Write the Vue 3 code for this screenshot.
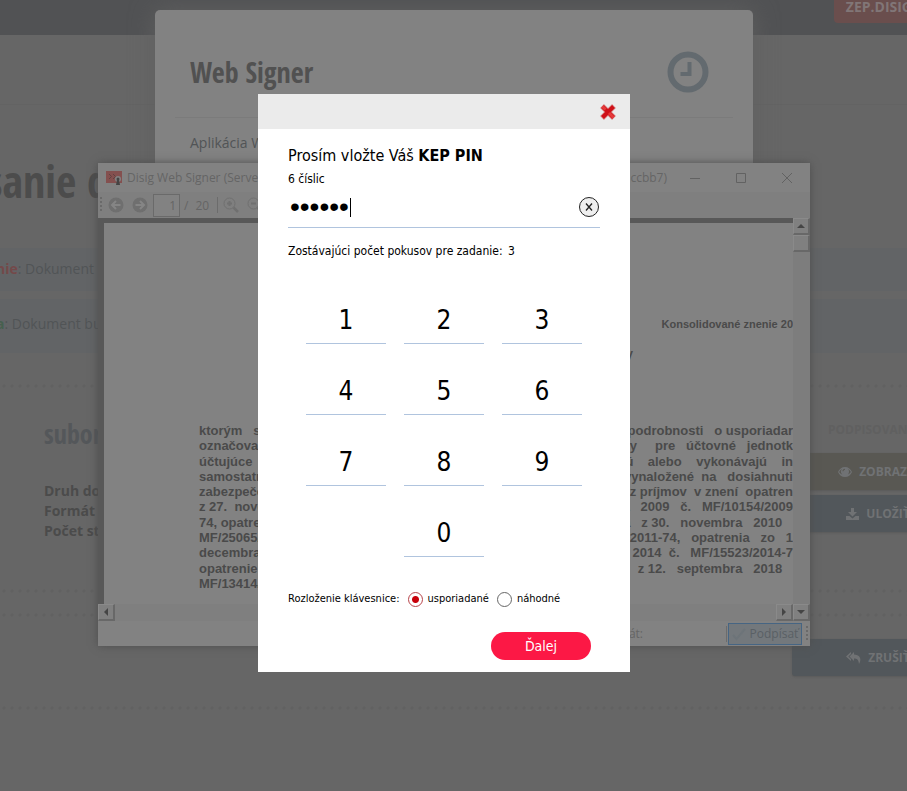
<template>
  <div class="page">
    <header class="topbar">
      <a class="env-badge" href="#">ZEP.DISIG.SK</a>
    </header>
    <div class="subnav"></div>

    <h1 class="page-title">sanie dokumentu</h1>

    <p class="alert"><strong class="alert-error">nie</strong>: Dokument</p>
    <p class="alert alert--tall"><strong class="alert-ok">a</strong>: Dokument bude</p>

    <div class="dots dots--first"></div>
    <section class="file">
      <div class="file-info">
        <h2>subor.pdf</h2>
        <p>Druh dokumentu</p>
        <p>Formát</p>
        <p>Počet strán</p>
      </div>
      <div class="file-actions">
        <span class="file-state">PODPISOVANIE</span>
        <button class="action action--view" type="button">
          <svg width="14" height="10" viewBox="0 0 14 10"><path d="M7 0C3.800 0 1.200 2 0 5c1.200 3 3.800 5 7 5s5.800-2 7-5C12.800 2 10.200 0 7 0zM4.200 1.800a4 4 0 0 0 0 5.600C2.800 7 1.800 6 1.200 5c.6-1.200 1.600-2.400 3-3.200zm5.600 0c1.400.8 2.400 2 3 3.200-.6 1-1.600 2-3 2.600a4 4 0 0 0 0-5.800zM7 1.800a2.500 2.500 0 0 0-2.500 2.500h1A1.500 1.500 0 0 1 7 2.800z" fill="currentColor" fill-rule="evenodd" /></svg>
          ZOBRAZIŤ
        </button>
        <button class="action" type="button">
          <svg width="13" height="12" viewBox="0 0 13 12"><path d="M5 0h3v4h3L6.500 8.500 2 4h3zM0 8h3.500l3 2.500 3-2.500H13v4H0z" fill="currentColor" /></svg>
          ULOŽIŤ
        </button>
      </div>
    </section>
    <div class="dots"></div>
    <div class="dots dots--second"></div>
    <div class="cancel-row">
      <button class="action" type="button">
        <svg width="15" height="12" viewBox="0 0 15 12"><path d="M5 0L0 4.500 5 9V7L2.300 4.500 5 2zM8 0L3.500 4.500 8 9V6.500c3 0 4.500 1 5 5.500C16 7 14 2.700 8 2.500z" fill="currentColor" /></svg>
        ZRUŠIŤ
      </button>
    </div>
    <div class="dots dots--last"></div>

    <section class="card">
      <div class="card-head">
        <h2>Web Signer</h2>
        <svg width="42" height="42" viewBox="0 0 42 42" fill="none" stroke="#636a6f">
          <circle cx="21" cy="21" r="17.500" stroke-width="6" />
          <path d="M22.500 11v12h-9" stroke-width="4" />
        </svg>
      </div>
      <p>Aplikácia Web Signer</p>
    </section>

    <section class="window">
      <div class="window-title">
        <svg width="17" height="16" viewBox="0 0 17 16">
          <path d="M0 1h16v12H0z" fill="#84504f" />
          <path d="M3 4l2.500 2.500L3 9M7 4l2.500 2.500L7 9" stroke="#5f4241" fill="none" />
          <circle cx="12" cy="9" r="3" fill="#828282" />
          <circle cx="12" cy="9" r="1.500" fill="#444" />
          <path d="M11 10h2l1 5h-4z" fill="#444" />
        </svg>
        <span class="window-name">Disig Web Signer (Server:</span>
        <span class="window-id">5ccbb7)</span>
        <div class="window-controls">
          <svg width="12" height="12" viewBox="0 0 12 12"><path d="M1 6.500h10" /></svg>
          <svg width="12" height="12" viewBox="0 0 12 12"><path d="M1.500 1.500h9v9h-9z" /></svg>
          <svg width="12" height="12" viewBox="0 0 12 12"><path d="M1 1l10 10M11 1L1 11" /></svg>
        </div>
      </div>

      <div class="toolbar">
        <span class="grip"></span>
        <svg width="16" height="16" viewBox="0 0 16 16"><circle cx="8" cy="8" r="7.500" fill="#6f6f6f" /><path d="M12.500 8H4M8 4L4 8l4 4" stroke="#858585" stroke-width="2" fill="none" /></svg>
        <svg width="16" height="16" viewBox="0 0 16 16"><circle cx="8" cy="8" r="7.500" fill="#6f6f6f" /><path d="M3.500 8H12M8 4l4 4-4 4" stroke="#858585" stroke-width="2" fill="none" /></svg>
        <label class="pager"><input type="text" value="1" aria-label="Strana">/ <span>20</span></label>
        <span class="divider"></span>
        <svg v-for="zoom in zooms" :key="zoom" width="16" height="16" viewBox="0 0 16 16" fill="none" stroke="#707070">
          <circle cx="6.500" cy="6.500" r="5.500" />
          <path :d="zoom" stroke-width="2" />
          <path d="M10.500 10.500l4.500 4.500" stroke-width="2.500" />
        </svg>
      </div>

      <div class="viewer">
        <div class="paper">
          <p class="paper-note">Konsolidované znenie 20</p>
          <p class="paper-heading">podrobnosti účtovnej závierky</p>
          <div class="paper-text">
            <p v-for="line in lines" :key="line[0]">
              <span>{{ line[0] }}</span>
              <span>{{ line[1] }}</span>
            </p>
          </div>
        </div>
        <div class="scroll-v">
          <span class="scroll-btn"><i class="arrow arrow--up"></i></span>
          <span class="scroll-btn scroll-thumb"></span>
        </div>
      </div>
      <div class="scroll-h">
        <span class="scroll-btn"><i class="arrow arrow--left"></i></span>
        <span class="scroll-btn scroll-end"><i class="arrow arrow--right"></i></span>
        <span class="scroll-btn"><i class="arrow arrow--down"></i></span>
      </div>
      <div class="statusbar">
        <span class="status-label">Certifikát:</span>
        <span class="divider"></span>
        <button class="sign-btn" type="button">
          <svg width="14" height="14" viewBox="0 0 14 14"><path d="M1 8l3.500 4L13 2" stroke="#6d7479" stroke-width="2" fill="none" /></svg>
          Podpísať
        </button>
        <span class="grip"></span>
      </div>
    </section>

    <div class="dialog" role="dialog" aria-labelledby="pin-label">
      <div class="dialog-head">
        <button class="close-btn" type="button" aria-label="Zavrieť">
          <svg width="18" height="18" viewBox="0 0 18 18">
            <path d="M3 3l12 12M15 3L3 15" stroke="#d98a8a" stroke-width="5.500" />
            <path d="M3.500 3.500l11 11M14.500 3.500l-11 11" stroke="#cf1018" stroke-width="4" />
            <path d="M10 10l4.500 4.500M3.500 3.500l3 3" stroke="#e63a3a" stroke-width="3" />
          </svg>
        </button>
      </div>
      <form class="dialog-body" @submit.prevent>
        <label id="pin-label" class="pin-label" for="pin">Prosím vložte Váš <strong>KEP PIN</strong></label>
        <p class="pin-hint">6 číslic</p>
        <div class="pin-field">
          <input id="pin" v-model="pin" type="password" maxlength="6" autocomplete="off">
          <span class="caret"></span>
          <button class="clear-btn" type="button" aria-label="Vymazať" @click="pin = ''">
            <svg width="20" height="20" viewBox="0 0 20 20" fill="none" stroke="#222">
              <circle cx="10" cy="10" r="9.500" fill="#efefef" />
              <path d="M7 6.500l6 7M13 6.500l-6 7" stroke-width="1.300" />
            </svg>
          </button>
        </div>
        <p class="attempts">Zostávajúci počet pokusov pre zadanie: <span>3</span></p>

        <div class="keypad">
          <button
            v-for="key in keys"
            :key="key"
            type="button"
            class="key"
            :class="{ 'key--zero': key === 0 }"
            @click="press(key)"
          >{{ key }}</button>
        </div>

        <div class="layout-row">
          <span>Rozloženie klávesnice:</span>
          <label><input v-model="layout" type="radio" name="layout" value="ordered">usporiadané</label>
          <label><input v-model="layout" type="radio" name="layout" value="random">náhodné</label>
        </div>
        <button class="next-btn" type="submit">Ďalej</button>
      </form>
    </div>
  </div>
</template>

<script setup>
import { ref } from 'vue';

const pin = ref('123456');
const layout = ref('ordered');
const keys = [1, 2, 3, 4, 5, 6, 7, 8, 9, 0];

const zooms = ['M4 6.500h5M6.500 4v5', 'M4 6.500h5'];

const lines = [
  ['ktorým   sa', 'podrobnosti   o usporiadar'],
  ['označovaní', 'položky     pre   účtovné   jednotk'],
  ['účtujúce   v', 'podnikajú    alebo    vykonávajú    in'],
  ['samostatnú', 'vynaložené  na   dosiahnuti'],
  ['zabezpečenie', 'z príjmov  v znení  opatren'],
  ['z 27.  novembra', 'decembra   2009   č.   MF/10154/2009'],
  ['74, opatrenia', 'opatrenia   z 30.   novembra   2010   '],
  ['MF/25065/', 'MF/2011-74,   opatrenia   zo   1'],
  ['decembra', 'decembra 2014  č.   MF/15523/2014-7'],
  ['opatrenie', 'opatrenia   z 12.   septembra   2018   '],
  ['MF/13414/', '']
];

const press = (key) => {
  if (pin.value.length < 6) pin.value += key;
};
</script>

<style>
body {
  margin: 0;
  background: #666;
}
</style>

<style scoped>
* {
  box-sizing: border-box;
}

h1, h2, p {
  margin: 0;
}

button {
  font-family: inherit;
  border: 0;
  padding: 0;
}

.page {
  position: relative;
  min-height: 100vh;
  overflow: hidden;
  background: #666;
  color: #515456;
  font-family: "Open Sans", "Noto Sans", sans-serif;
  font-size: 14px;
}

.topbar {
  display: flex;
  justify-content: flex-end;
  height: 35px;
  background: #515254;
}

.env-badge {
  height: 23px;
  padding: 0 12px;
  margin-right: -38px;
  border-radius: 0 0 4px 4px;
  background: #6a4e4d;
  color: #817677;
  font-weight: 700;
  line-height: 14px;
  text-decoration: none;
}

.subnav {
  height: 70px;
  border-bottom: 1px solid #636363;
}

.page-title {
  margin: 46px 0 37px -14px;
  color: #4c4c4c;
  font-family: "Open Sans Condensed", "Open Sans", sans-serif;
  font-size: 44px;
  line-height: 60px;
  white-space: nowrap;
}

.alert {
  height: 43px;
  margin-bottom: 8px;
  margin-left: -4px;
  background: #626466;
  line-height: 42px;
}

.alert--tall {
  height: 54px;
  line-height: 50px;
}

.alert-error {
  color: #74494a;
}

.alert-ok {
  color: #46604f;
}

.dots {
  height: 4px;
  margin-bottom: 20px;
  background: radial-gradient(circle, #616161 1px, transparent 2px) 0 0 / 8px 4px repeat-x;
}

.dots--first {
  margin: 31px 0 0;
}

.dots--second {
  margin-bottom: 22px;
}

.dots--last {
  margin-top: 30px;
}

.file {
  display: flex;
  justify-content: space-between;
  height: 201px;
  padding: 24px 0 0 44px;
}

.file-info {
  font-weight: 700;
  line-height: 20px;
  color: #4b4b4b;
}

.file-info h2 {
  margin-bottom: 25px;
  color: #54575a;
  font-family: "Open Sans Condensed", "Open Sans", sans-serif;
  font-size: 26px;
  line-height: 44px;
}

.file-actions {
  display: flex;
  flex-direction: column;
  gap: 5px;
  width: 172px;
  margin-right: -57px;
}

.file-state {
  padding-left: 36px;
  color: #606060;
  font-size: 12px;
  font-weight: 700;
  line-height: 36px;
}

.action {
  display: flex;
  align-items: center;
  justify-content: center;
  gap: 7px;
  width: 172px;
  height: 37px;
  border-radius: 3px;
  background: #52575b;
  color: #707274;
  font-size: 12px;
  font-weight: 700;
  box-shadow: 0 1px 2px #5a5a5a;
}

.action--view {
  background: #595853;
}

.cancel-row {
  display: flex;
  justify-content: flex-end;
  margin-right: -57px;
}

.card {
  position: absolute;
  top: 10px;
  left: 155px;
  right: 154px;
  height: 400px;
  padding: 0 20px;
  border-radius: 5px;
  background: #828282;
  box-shadow: 0 0 24px #606060;
}

.card-head {
  display: flex;
  align-items: center;
  justify-content: space-between;
  height: 108px;
  padding: 16px 24px 0 15px;
  border-bottom: 1px solid #7b7b7b;
}

.card h2 {
  color: #515151;
  font-family: "Open Sans Condensed", "Open Sans", sans-serif;
  font-size: 28px;
}

.card p {
  padding: 15px;
  line-height: 20px;
}

.window {
  position: absolute;
  top: 163px;
  left: 98px;
  right: 97px;
  background: #828282;
  box-shadow: 0 0 8px #4e4e4e;
  color: #656565;
  font-family: "Open Sans", "Noto Sans", sans-serif;
  font-size: 12px;
}

.window-title {
  display: flex;
  align-items: center;
  height: 29px;
  padding: 0 17px 0 8px;
}

.window-name {
  flex: 1;
  padding-left: 4px;
}

.window-id {
  width: 60px;
  text-align: right;
}

.window-controls {
  display: flex;
  gap: 34px;
  margin-left: 22px;
  fill: none;
  stroke: #626262;
}

.toolbar {
  display: flex;
  align-items: center;
  gap: 8px;
  height: 26px;
  padding-left: 2px;
  background: #7f7f7f;
}

.grip {
  width: 2px;
  height: 16px;
  background: repeating-linear-gradient(#6a6a6a 0 2px, transparent 2px 4px);
}

.toolbar .grip {
  margin-right: -2px;
}

.pager {
  display: flex;
  align-items: center;
  gap: 4px;
  margin-left: -3px;
}

.pager span {
  margin-left: 3px;
}

.pager input {
  width: 27px;
  height: 23px;
  padding: 0 3px;
  border: 1px solid #6a6a6a;
  background: #828282;
  color: inherit;
  font: inherit;
  text-align: right;
}

.divider {
  width: 1px;
  height: 16px;
  background: #6c6c6c;
}

.toolbar .divider {
  margin-right: -3px;
}

.viewer {
  display: flex;
  height: 386px;
}

.paper {
  flex: 1;
  min-width: 0;
  overflow: hidden;
  border-top: 5px solid #585858;
  border-left: 6px solid #585858;
  color: #4a4a4a;
  font-family: "Liberation Sans", sans-serif;
  font-size: 13px;
  font-weight: 700;
}

.paper-note {
  padding-top: 91px;
  font-size: 11px;
  line-height: 20px;
  text-align: right;
}

.paper-heading {
  padding: 10px 160px 0 0;
  line-height: 20px;
  text-align: right;
  white-space: nowrap;
}

.paper-text {
  display: flex;
  flex-direction: column;
  justify-content: space-between;
  height: 168px;
  margin-top: 59px;
  padding-left: 95px;
}

.paper-text p {
  display: flex;
  justify-content: space-between;
  line-height: 15px;
  white-space: pre;
}

.scroll-v {
  width: 17px;
  background: #7d7d7d;
}

.scroll-btn {
  display: flex;
  align-items: center;
  justify-content: center;
  width: 17px;
  height: 17px;
  border: 1px solid #8a8a8a;
  border-right: 2px solid #686868;
  border-bottom: 2px solid #686868;
  background: #808080;
}

.arrow {
  width: 8px;
  height: 4px;
  background: #454545;
}

.arrow--up {
  clip-path: polygon(50% 0, 100% 100%, 0 100%);
}

.arrow--down {
  clip-path: polygon(0 0, 100% 0, 50% 100%);
}

.arrow--left,
.arrow--right {
  width: 4px;
  height: 8px;
}

.arrow--left {
  clip-path: polygon(100% 0, 100% 100%, 0 50%);
}

.arrow--right {
  clip-path: polygon(0 0, 100% 50%, 0 100%);
}

.scroll-h {
  display: flex;
  height: 17px;
  background: #7f7f7f;
}

.scroll-end {
  margin-left: auto;
}

.statusbar {
  display: flex;
  align-items: center;
  justify-content: flex-end;
  height: 25px;
  padding-right: 2px;
}

.status-label {
  margin-right: 83px;
}

.sign-btn {
  display: flex;
  align-items: center;
  justify-content: center;
  gap: 4px;
  width: 74px;
  height: 22px;
  margin: 0 4px 0 1px;
  border: 1px solid #466583;
  background: #73787c;
  color: #5a6065;
  font-size: 12px;
}

.dialog {
  position: absolute;
  top: 94px;
  left: 258px;
  width: 372px;
  background: #fff;
  color: #000;
  font-family: "DejaVu Sans Condensed", Tahoma, "DejaVu Sans", sans-serif;
}

.dialog-head {
  display: flex;
  align-items: center;
  justify-content: flex-end;
  height: 35px;
  padding-right: 13px;
  background: #ebebeb;
}

.close-btn,
.clear-btn {
  display: flex;
  background: none;
}

.dialog-body {
  display: flex;
  flex-direction: column;
  padding: 16px 30px 12px;
}

.pin-label {
  font-size: 16px;
  line-height: 22px;
}

.pin-hint {
  font-size: 12px;
  line-height: 24px;
}

.pin-field {
  display: flex;
  align-items: center;
  height: 37px;
  padding-bottom: 4px;
  border-bottom: 1px solid #b0c4de;
}

.pin-field input {
  width: 62px;
  height: 32px;
  padding: 0 0 0 2px;
  border: 0;
  outline: 0;
  background: none;
  font-family: "Liberation Sans", sans-serif;
  font-size: 28px;
}

.caret {
  width: 1px;
  height: 19px;
  background: #000;
}

.clear-btn {
  margin-left: auto;
  margin-right: 1px;
}

.attempts {
  margin-top: 13px;
  font-size: 12px;
  line-height: 20px;
}

.attempts span {
  margin-left: 2px;
}

.keypad {
  display: grid;
  grid-template-columns: repeat(3, 1fr);
  gap: 23px 18px;
  margin: 35px 18px 32px;
}

.key {
  height: 48px;
  border-bottom: 1px solid #b0c4de;
  background: none;
  color: #000;
  font-size: 26px;
}

.key--zero {
  grid-column: 2;
}

.layout-row {
  display: flex;
  align-items: center;
  gap: 8px;
  font-size: 11px;
  line-height: 20px;
}

.layout-row label {
  display: flex;
  align-items: center;
  gap: 5px;
}

.layout-row input {
  appearance: none;
  width: 15px;
  height: 15px;
  margin: 0;
  border: 1px solid #666;
  border-radius: 50%;
}

.layout-row input:checked {
  border-color: #b8444a;
  background: radial-gradient(circle, #c8000a 3px, #fff 4px);
}

.next-btn {
  align-self: flex-end;
  width: 100px;
  height: 28px;
  margin: 23px 9px 0 0;
  border-radius: 14px;
  background: #fc1845;
  color: #fff;
  font-size: 14px;
}
</style>
